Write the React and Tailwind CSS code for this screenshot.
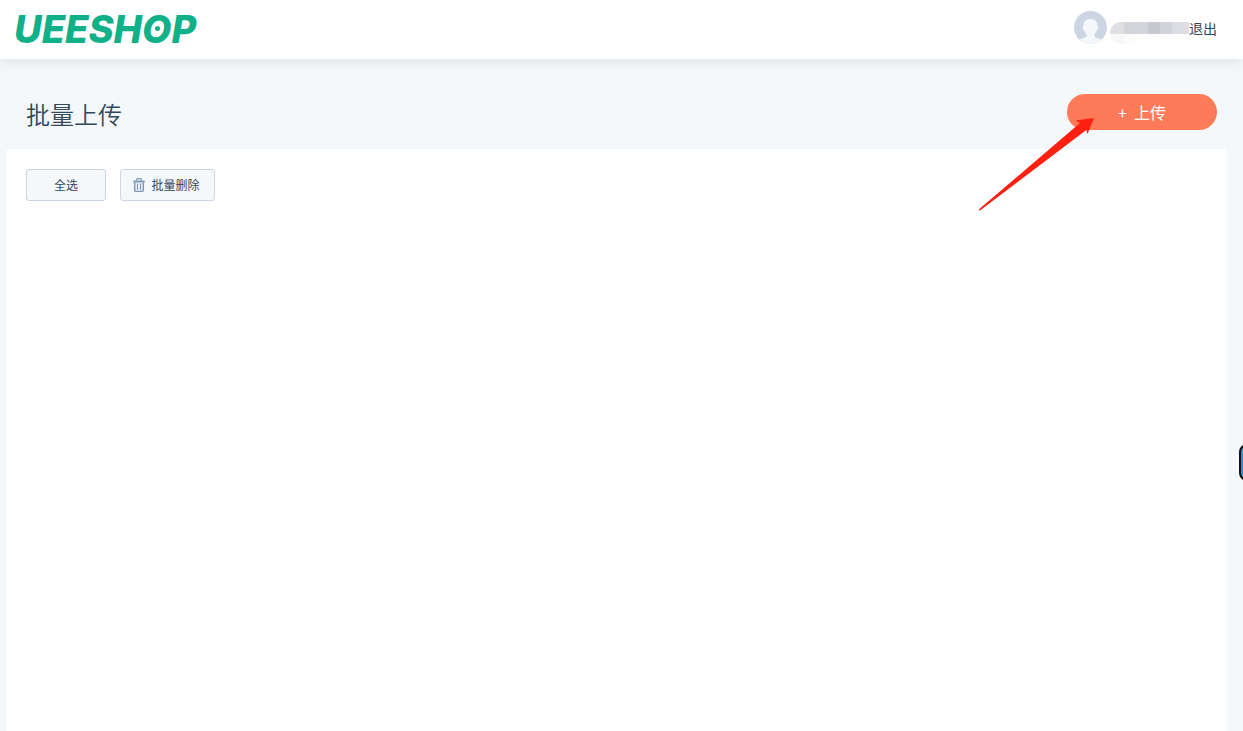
import React from 'react'

// Blocks that hide the account name, top row and the faint row below it
const MASK_TOP = ['bg-[#dfdfe4]', 'bg-[#d3d4d9]', 'bg-[#d3d5da]', 'bg-[#c7c7d0]', 'bg-[#d1d2da]', 'bg-[#dbdfe4]', 'bg-[#dfdde2]']
const MASK_BOTTOM = ['bg-[#f7f7f8]', 'bg-[#fbfbfc]']

function Logo() {
  return (
    <a href="#" aria-label="UEESHOP" className="relative block pb-[2px] font-['Inter','Liberation_Sans',sans-serif] text-[38px] leading-[56px] font-extrabold italic text-[#10b088]">
      UEESHOP
      <span className="absolute top-[25px] left-[141px] size-[5px] rounded-full bg-[#10b088]" />
    </a>
  )
}

function Avatar() {
  return (
    <svg viewBox="0 0 33 33" className="size-[33px] shrink-0 rounded-full" aria-hidden="true">
      <rect width="33" height="33" fill="#cbd6e2" />
      <path
        d="M16.500 8c4.600 0 7 2.800 7 6.600 0 .9.800 1.200.6 2.600-.2 1.300-.9 2-1.500 2.300-.5 1.700-1.300 2.900-2.100 3.700v1.600c0 1 .7 1.500 2 2 2.400.8 4.700 1.400 6.500 2.700V33H4v-3.500c1.800-1.300 4.100-1.900 6.500-2.700 1.300-.5 2-1 2-2v-1.600c-.8-.8-1.600-2-2.100-3.700-.6-.3-1.300-1-1.500-2.300-.2-1.400.6-1.700.6-2.600C9.500 10.800 11.900 8 16.500 8z"
        fill="#f4f8fb"
      />
    </svg>
  )
}

function TrashIcon() {
  return (
    <svg viewBox="0 0 12 14" className="h-[14px] w-[12px] shrink-0" fill="none" stroke="#7c98b6" aria-hidden="true">
      <path d="M3.500 2.500V1.800c0-.7.500-1.200 1.200-1.200h2.600c.7 0 1.200.5 1.200 1.200v.7" strokeWidth="1.200" />
      <path d="M.3 3.500h11.400" strokeWidth="2" />
      <path d="M1.700 4.500v7.600c0 .8.500 1.300 1.300 1.300h6c.8 0 1.300-.5 1.300-1.300V4.500" strokeWidth="1.500" />
      <path d="M4.500 5.500v6.500M7.500 5.500v6.500" strokeWidth="1.200" />
    </svg>
  )
}

function Header() {
  return (
    <header className="relative flex h-[59px] items-center justify-between bg-white pr-[26px] pl-[14px] shadow-[0_2px_14px_rgba(0,0,0,0.1)]">
      <Logo />
      <div className="flex items-start self-start pt-[11px]">
        <Avatar />
        <div className="ml-[3px] mt-[11px] overflow-hidden rounded-l-full" aria-hidden="true">
          <div className="flex">
            {MASK_TOP.map((bg, i) => (
              <span key={i} className={`h-[12px] ${i === 0 ? 'w-[14px]' : i === 6 ? 'w-[5px]' : 'w-[12px]'} ${bg}`} />
            ))}
          </div>
          <div className="flex">
            {MASK_BOTTOM.map((bg, i) => (
              <span key={i} className={`h-[10px] ${i === 0 ? 'w-[14px]' : 'w-[12px]'} ${bg}`} />
            ))}
          </div>
        </div>
        <a href="#" className="mt-[7px] text-[14px] leading-[20px]">退出</a>
      </div>
    </header>
  )
}

function PointerArrow() {
  return (
    <svg
      viewBox="0 0 116 93"
      className="pointer-events-none absolute top-[24px] left-[-88px] h-[93px] w-[116px]"
      aria-hidden="true"
    >
      <path d="M115 0 108.500 16 107.300 11.900 1 92.500Q0 92.500 0 91.300L101 5 96.500 2.400Z" fill="#ff2012" />
    </svg>
  )
}

export default function App() {
  return (
    <div className="flex min-h-screen flex-col overflow-x-hidden bg-[#f4f8fb] font-['Noto_Sans_CJK_SC',sans-serif] text-[#33475b]">
      <Header />

      <main className="flex flex-1 flex-col pr-[16px] pl-[6px]">
        <div className="flex items-end justify-between pt-[35px] pr-[10px] pb-[17px] pl-[20px]">
          <h1 className="text-[24px] leading-[36px] font-[350]">批量上传</h1>
          <div className="relative pb-[2px]">
            <button type="button" className="flex h-[36px] w-[150px] items-center justify-center gap-[7px] rounded-full bg-[#ff7a59] text-[16px] text-white">
              <span>+</span>
              <span>上传</span>
            </button>
            <PointerArrow />
          </div>
        </div>

        <section className="flex-1 rounded-t-[4px] bg-white p-[20px]">
          <div className="flex gap-[14px] text-[12px]">
            <button type="button" className="h-[32px] w-[80px] rounded-[3px] border border-[#cbd6e2] bg-[#f4f8fb]">
              全选
            </button>
            <button type="button" className="flex h-[32px] w-[95px] items-center justify-center gap-[6px] rounded-[3px] border border-[#cbd6e2] bg-[#f4f8fb] pr-[2px]">
              <TrashIcon />
              批量删除
            </button>
          </div>
        </section>
      </main>

      {/* docked side widget, mostly off screen */}
      <button
        type="button"
        aria-label="展开"
        className="fixed top-[444px] right-[-33px] size-[37px] rounded-[8px] border-2 border-[#111111] bg-[#2d8fd0]"
      />
    </div>
  )
}
